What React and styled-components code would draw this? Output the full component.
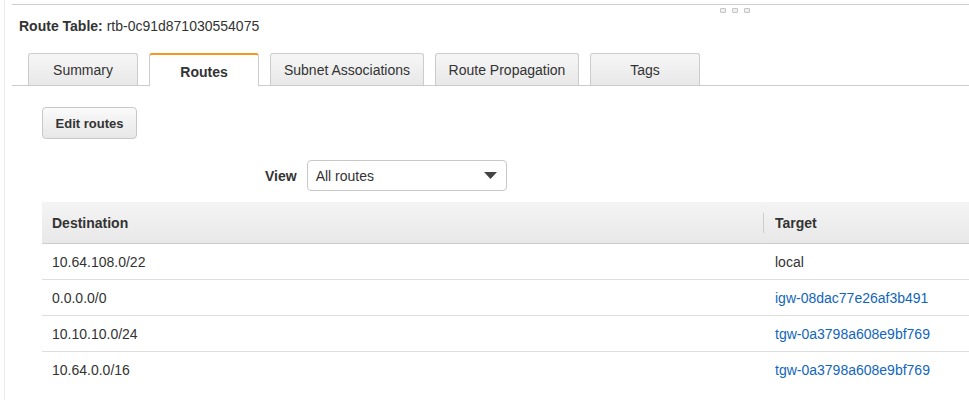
import styled, { createGlobalStyle } from "styled-components";

const GlobalStyle = createGlobalStyle`
  body {
    margin: 0;
    font-family: "Liberation Sans", Arial, Helvetica, sans-serif;
    font-size: 14px;
    color: #333;
    background: #fff;
    overflow: hidden;
  }
`;

const tabs = [
  { name: "Summary", width: 110 },
  { name: "Routes", width: 110, active: true },
  { name: "Subnet Associations", width: 154 },
  { name: "Route Propagation", width: 144 },
  { name: "Tags", width: 110 },
];

const routes = [
  { destination: "10.64.108.0/22", target: "local" },
  { destination: "0.0.0.0/0", target: "igw-08dac77e26af3b491", link: true },
  { destination: "10.10.10.0/24", target: "tgw-0a3798a608e9bf769", link: true },
  { destination: "10.64.0.0/16", target: "tgw-0a3798a608e9bf769", link: true },
];

export default function App() {
  return (
    <>
      <GlobalStyle />
      <StyledFrame>
        <StyledSplitter>
          <StyledGrip>
            <StyledGripDot />
            <StyledGripDot />
            <StyledGripDot />
          </StyledGrip>
        </StyledSplitter>
        <StyledTitle>
          <strong>Route Table:</strong> rtb-0c91d871030554075
        </StyledTitle>
        <StyledTabBar>
          {tabs.map((tab) => (
            <StyledTab key={tab.name} $active={tab.active} $width={tab.width}>
              {tab.name}
            </StyledTab>
          ))}
        </StyledTabBar>
        <StyledContent>
          <StyledButton type="button">Edit routes</StyledButton>
          <StyledViewRow>
            <StyledLabel>View</StyledLabel>
            <StyledSelect>
              <span>All routes</span>
              <svg width="13" height="7" viewBox="0 0 13 7">
                <path d="M0 0h13L6.5 7z" fill="#444" />
              </svg>
            </StyledSelect>
          </StyledViewRow>
          <StyledTable>
            <colgroup>
              <col style={{ width: 721 }} />
              <col />
            </colgroup>
            <thead>
              <tr>
                <StyledHeadCell>Destination</StyledHeadCell>
                <StyledHeadCell $divider>Target</StyledHeadCell>
              </tr>
            </thead>
            <tbody>
              {routes.map((route, index) => (
                <StyledRow key={index}>
                  <StyledCell>{route.destination}</StyledCell>
                  <StyledCell $target>
                    {route.link ? (
                      <StyledLink href="#">{route.target}</StyledLink>
                    ) : (
                      route.target
                    )}
                  </StyledCell>
                </StyledRow>
              ))}
            </tbody>
          </StyledTable>
        </StyledContent>
      </StyledFrame>
    </>
  );
}

const StyledFrame = styled.div`
  margin-left: 4px;
  border-left: 1px solid #ebebeb;
  height: 400px;
  padding-top: 4px;
  box-sizing: border-box;
`;

const StyledSplitter = styled.div`
  margin-left: 7px;
  border-top: 1px solid #cfcfcf;
  height: 7px;
  padding-top: 3px;
  box-sizing: border-box;
`;

const StyledGrip = styled.div`
  display: flex;
  gap: 6px;
  margin-left: 708px;
`;

const StyledGripDot = styled.span`
  width: 4px;
  height: 3px;
  border: 1px solid #c4c4c4;
  border-radius: 1px;
  background: #f0f0f0;
`;

const StyledTitle = styled.div`
  margin-top: 7px;
  padding-left: 14px;
  line-height: 16px;
  color: #333;

  strong {
    color: #333;
  }
`;

const StyledTabBar = styled.div`
  display: flex;
  align-items: flex-end;
  gap: 11px;
  margin: 19px 0 0 7px;
  padding-left: 16px;
  height: 32px;
  border-bottom: 1px solid #cccccc;
`;

const StyledTab = styled.div`
  box-sizing: border-box;
  width: ${({ $width }) => $width}px;
  padding-top: ${({ $active }) => ($active ? "9px" : "8px")};
  height: ${({ $active }) => ($active ? "33px" : "32px")};
  margin-bottom: ${({ $active }) => ($active ? "-1px" : "0")};
  text-align: center;
  line-height: 17px;
  border: 1px solid #cccccc;
  border-top: ${({ $active }) =>
    $active ? "2px solid #f7971e" : "1px solid #cccccc"};
  border-bottom: none;
  border-radius: 3px 3px 0 0;
  background: ${({ $active }) =>
    $active ? "#fff" : "linear-gradient(#f6f6f6, #e8e8e8)"};
  font-weight: ${({ $active }) => ($active ? "bold" : "normal")};
  color: #333;
  white-space: nowrap;
`;

const StyledContent = styled.div`
  padding: 21px 0 0 37px;
`;

const StyledButton = styled.button`
  display: block;
  box-sizing: border-box;
  height: 32px;
  width: 95px;
  padding: 1px 0 0;
  border: 1px solid #c8c8c8;
  border-radius: 4px;
  background: linear-gradient(#fafafa, #e7e7e7);
  font-family: inherit;
  font-size: 13px;
  font-weight: bold;
  color: #333;
`;

const StyledViewRow = styled.div`
  display: flex;
  align-items: center;
  gap: 10px;
  margin-top: 21px;
  padding-left: 223px;
`;

const StyledLabel = styled.span`
  font-weight: bold;
  color: #333;
`;

const StyledSelect = styled.div`
  box-sizing: border-box;
  width: 200px;
  height: 31px;
  display: flex;
  align-items: center;
  justify-content: space-between;
  padding: 0 9px 0 8px;
  border: 1px solid #c8c8c8;
  border-radius: 4px;
  background: #fff;
  color: #333;
`;

const StyledTable = styled.table`
  margin-top: 11px;
  width: 100%;
  table-layout: fixed;
  border-collapse: collapse;
`;

const StyledHeadCell = styled.th`
  position: relative;
  height: 41px;
  padding: 0 0 0 ${({ $divider }) => ($divider ? "12px" : "10px")};
  text-align: left;
  font-weight: bold;
  color: #333;
  background: linear-gradient(#f4f4f4, #e8e8e8);
  border-bottom: 1px solid #cccccc;

  &::before {
    content: "";
    display: ${({ $divider }) => ($divider ? "block" : "none")};
    position: absolute;
    left: 0;
    top: 11px;
    height: 20px;
    border-left: 1px solid #cccccc;
  }
`;

const StyledRow = styled.tr`
  &:last-child td {
    border-bottom: none;
  }
`;

const StyledCell = styled.td`
  height: 35px;
  padding: 0 0 0 ${({ $target }) => ($target ? "12px" : "10px")};
  border-bottom: 1px solid #dedede;
  color: #333;
`;

const StyledLink = styled.a`
  color: #1166bb;
  text-decoration: none;
`;
